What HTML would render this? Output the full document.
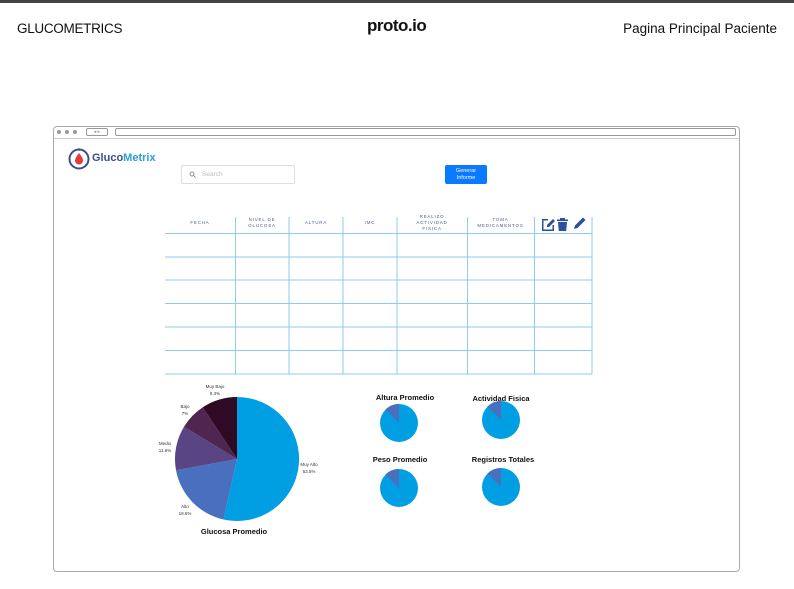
<!DOCTYPE html>
<html><head><meta charset="utf-8"><style>
*{margin:0;padding:0;box-sizing:border-box}
body{width:794px;height:589px;background:#fff;font-family:"Liberation Sans",sans-serif;position:relative;overflow:hidden}
.a{position:absolute}
.hdr{font-size:13.5px;color:#111;top:21px}
.th{font-size:4.5px;letter-spacing:0.8px;color:#4a5a9a;text-align:center;line-height:6px}
.lbl{font-size:4.5px;color:#333;text-align:center;line-height:7px}
.ttl{font-size:7.5px;font-weight:bold;color:#111;text-align:center}
</style></head><body>
<div class="a" style="left:0;top:0;width:794px;height:3px;background:#444"></div>
<div class="a hdr" style="left:17px;letter-spacing:-0.3px">GLUCOMETRICS</div>
<div class="a" style="left:367px;top:16px;font-size:17px;font-weight:bold;letter-spacing:-0.5px;color:#111">proto.io</div>
<div class="a hdr" style="right:17px">Pagina Principal Paciente</div>

<div class="a" style="left:53px;top:126px;width:687px;height:446px;border:1px solid #aaa;border-radius:4px"></div>
<div class="a" style="left:57px;top:130px;width:4px;height:4px;border-radius:50%;background:#999"></div>
<div class="a" style="left:65px;top:130px;width:4px;height:4px;border-radius:50%;background:#999"></div>
<div class="a" style="left:73px;top:130px;width:4px;height:4px;border-radius:50%;background:#999"></div>
<div class="a" style="left:86px;top:128px;width:22px;height:8px;border:1px solid #999;border-radius:2px;font-size:5px;color:#999;text-align:center;line-height:6px">◂ ▸</div>
<div class="a" style="left:115px;top:128px;width:621px;height:8px;border:1px solid #999;border-radius:2px"></div>
<div class="a" style="left:54px;top:138px;width:685px;height:1px;background:#ccc"></div>

<svg class="a" style="left:67px;top:147px" width="24" height="24" viewBox="0 0 24 24">
<circle cx="12" cy="12" r="9.5" fill="none" stroke="#3b4f8f" stroke-width="2"/>
<circle cx="12" cy="2.5" r="1.3" fill="#3b4f8f"/>
<path d="M12 6 Q8 11 8 13.5 A4 4 0 0 0 16 13.5 Q16 11 12 6Z" fill="#e23b3b"/>
</svg>
<div class="a" style="left:92px;top:152px;font-size:11px;font-weight:bold;color:#3b4f8f">Gluco<span style="color:#2a9fd6">Metrix</span></div>

<div class="a" style="left:181px;top:165px;width:114px;height:19px;border:1px solid #ddd;border-radius:2px;font-size:6.5px;color:#bbb;padding:5px 0 0 20px">Search</div>
<svg class="a" style="left:189px;top:171px" width="7" height="7" viewBox="0 0 7 7"><circle cx="3" cy="3" r="2" fill="none" stroke="#777" stroke-width="0.8"/><path d="M4.5 4.5L6.5 6.5" stroke="#777" stroke-width="0.8"/></svg>
<div class="a" style="left:445px;top:165px;width:42px;height:19px;background:#0a7bff;border-radius:2px;color:#fff;font-size:5.5px;text-align:center;line-height:6.5px;padding-top:3px">Generar<br>Informe</div>

<svg class="a" style="left:0;top:0" width="794" height="589">
<g stroke="#8ecbec" stroke-width="1">
<line x1="165" y1="233.5" x2="592" y2="233.5"/>
<line x1="165" y1="257" x2="592" y2="257"/>
<line x1="165" y1="280" x2="592" y2="280"/>
<line x1="165" y1="303.5" x2="592" y2="303.5"/>
<line x1="165" y1="327" x2="592" y2="327"/>
<line x1="165" y1="350.5" x2="592" y2="350.5"/>
<line x1="165" y1="374" x2="592" y2="374"/>
<line x1="235.5" y1="217" x2="235.5" y2="374"/>
<line x1="289" y1="217" x2="289" y2="374"/>
<line x1="343" y1="217" x2="343" y2="374"/>
<line x1="397" y1="217" x2="397" y2="374"/>
<line x1="467.5" y1="217" x2="467.5" y2="374"/>
<line x1="534.5" y1="217" x2="534.5" y2="374"/>
<line x1="592" y1="217" x2="592" y2="374"/>
</g>
<g fill="#2d4f9e">
<path d="M542 219h6v1.5h-4.5v9h9v-4.5h1.5v6h-12z"/>
<path d="M547 225l6-6 2 2-6 6h-2z"/>
<rect x="557" y="219.5" width="11" height="1.6"/><rect x="560" y="218" width="5" height="1.6"/>
<path d="M558 222h9l-0.8 9h-7.4z"/>
<path d="M574 229l1-3.5 8-8 2.5 2.5-8 8z"/>
</g>
<path d="M237 459 L237 397 A62 62 0 1 1 223.5 519.5Z" fill="#009fe3"/>
<path d="M237 459 L223.5 519.5 A62 62 0 0 1 176 470.2Z" fill="#4a6fbf"/>
<path d="M237 459 L176 470.2 A62 62 0 0 1 184 426.8Z" fill="#5a4584"/>
<path d="M237 459 L184 426.8 A62 62 0 0 1 202.8 407.3Z" fill="#4e2650"/>
<path d="M237 459 L202.8 407.3 A62 62 0 0 1 237 397Z" fill="#2f0a24"/>
<g>
<circle cx="399" cy="423" r="19" fill="#009fe3"/><path d="M399 423L399 404A19 19 0 0 0 385.5 409.5Z" fill="#4a6fbf"/>
<circle cx="501" cy="420" r="19" fill="#009fe3"/><path d="M501 420L501 401A19 19 0 0 0 487.5 406.5Z" fill="#4a6fbf"/>
<circle cx="399" cy="488" r="19" fill="#009fe3"/><path d="M399 488L399 469A19 19 0 0 0 385.5 474.5Z" fill="#4a6fbf"/>
<circle cx="501" cy="487" r="19" fill="#009fe3"/><path d="M501 487L501 468A19 19 0 0 0 487.5 473.5Z" fill="#4a6fbf"/>
</g>
</svg>

<div class="a th" style="left:165px;top:220px;width:70px">FECHA</div>
<div class="a th" style="left:235px;top:217px;width:54px">NIVEL DE<br>GLUCOSA</div>
<div class="a th" style="left:289px;top:220px;width:54px">ALTURA</div>
<div class="a th" style="left:343px;top:220px;width:54px">IMC</div>
<div class="a th" style="left:397px;top:214px;width:70px">REALIZO<br>ACTIVIDAD<br>FISICA</div>
<div class="a th" style="left:467px;top:217px;width:67px">TOMA<br>MEDICAMENTOS</div>

<div class="a lbl" style="left:200px;top:383px;width:30px">Muy Bajo<br>9.3%</div>
<div class="a lbl" style="left:170px;top:403px;width:30px">Bajo<br>7%</div>
<div class="a lbl" style="left:150px;top:440px;width:30px">Medio<br>11.6%</div>
<div class="a lbl" style="left:170px;top:503px;width:30px">Alto<br>18.6%</div>
<div class="a lbl" style="left:294px;top:461px;width:30px">Muy Alto<br>53.5%</div>
<div class="a ttl" style="left:184px;top:527px;width:100px">Glucosa Promedio</div>
<div class="a ttl" style="left:355px;top:393px;width:100px">Altura Promedio</div>
<div class="a ttl" style="left:451px;top:394px;width:100px">Actividad Fisica</div>
<div class="a ttl" style="left:350px;top:455px;width:100px">Peso Promedio</div>
<div class="a ttl" style="left:453px;top:455px;width:100px">Registros Totales</div>
</body></html>
